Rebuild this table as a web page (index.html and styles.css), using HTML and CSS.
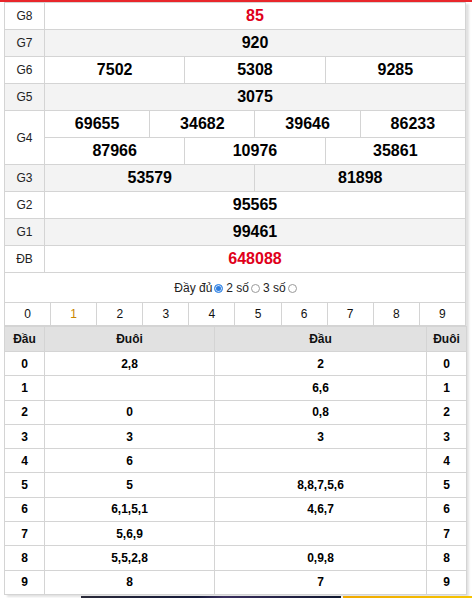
FILE: index.html
```html
<!DOCTYPE html>
<html lang="vi">
<head>
<meta charset="utf-8">
<title>KQXS</title>
<link rel="stylesheet" href="styles.css">
</head>
<body>
<div class="topbar"></div>
<div class="box">
  <table class="prize">
    <colgroup>
      <col class="c-label">
      <col span="12">
    </colgroup>
    <tr><td class="lbl">G8</td><td colspan="12" class="num red">85</td></tr>
    <tr class="alt"><td class="lbl">G7</td><td colspan="12" class="num">920</td></tr>
    <tr><td class="lbl">G6</td><td colspan="4" class="num">7502</td><td colspan="4" class="num">5308</td><td colspan="4" class="num">9285</td></tr>
    <tr class="alt"><td class="lbl">G5</td><td colspan="12" class="num">3075</td></tr>
    <tr><td class="lbl" rowspan="2">G4</td><td colspan="3" class="num">69655</td><td colspan="3" class="num">34682</td><td colspan="3" class="num">39646</td><td colspan="3" class="num">86233</td></tr>
    <tr><td colspan="4" class="num">87966</td><td colspan="4" class="num">10976</td><td colspan="4" class="num">35861</td></tr>
    <tr class="alt"><td class="lbl">G3</td><td colspan="6" class="num">53579</td><td colspan="6" class="num">81898</td></tr>
    <tr><td class="lbl">G2</td><td colspan="12" class="num">95565</td></tr>
    <tr class="alt"><td class="lbl">G1</td><td colspan="12" class="num">99461</td></tr>
    <tr><td class="lbl">ĐB</td><td colspan="12" class="num red">648088</td></tr>
  </table>

  <div class="options">
    <span class="opt">Đầy đủ</span><span class="radio checked"></span>
    <span class="opt">2 số</span><span class="radio"></span>
    <span class="opt">3 số</span><span class="radio"></span>
  </div>

  <table class="digits">
    <tr>
      <td>0</td><td class="active">1</td><td>2</td><td>3</td><td>4</td><td>5</td><td>6</td><td>7</td><td>8</td><td>9</td>
    </tr>
  </table>

  <table class="loto">
    <colgroup>
      <col class="c-d1"><col class="c-t1"><col class="c-t2"><col class="c-d2">
    </colgroup>
    <tr class="head"><th>Đầu</th><th>Đuôi</th><th>Đầu</th><th>Đuôi</th></tr>
    <tr><td>0</td><td>2,8</td><td>2</td><td>0</td></tr>
    <tr><td>1</td><td></td><td>6,6</td><td>1</td></tr>
    <tr><td>2</td><td>0</td><td>0,8</td><td>2</td></tr>
    <tr><td>3</td><td>3</td><td>3</td><td>3</td></tr>
    <tr><td>4</td><td>6</td><td></td><td>4</td></tr>
    <tr><td>5</td><td>5</td><td>8,8,7,5,6</td><td>5</td></tr>
    <tr><td>6</td><td>6,1,5,1</td><td>4,6,7</td><td>6</td></tr>
    <tr><td>7</td><td>5,6,9</td><td></td><td>7</td></tr>
    <tr><td>8</td><td>5,5,2,8</td><td>0,9,8</td><td>8</td></tr>
    <tr><td>9</td><td>8</td><td>7</td><td>9</td></tr>
  </table>
</div>
<div class="banner">
  <div class="banner-dark"></div>
  <div class="banner-yellow"></div>
</div>
</body>
</html>
```

FILE: styles.css
```css
html, body {
  margin: 0;
  padding: 0;
  background: #fff;
  font-family: "Liberation Sans", Arial, sans-serif;
  color: #111;
}

.topbar {
  height: 2px;
  background: #e8262b;
}

.box {
  width: 462px;
  margin-left: 4px;
  box-shadow: 3px 2px 2px #e2e2e2;
  background: #fff;
}

table {
  border-collapse: collapse;
  table-layout: fixed;
  width: 462px;
}

td, th {
  border: 1px solid #d4d4d4;
  padding: 0;
  text-align: center;
}

/* prize table */
.prize .c-label { width: 40px; }
.prize td { height: 26px; }
.prize tr.alt td { background: #f3f3f3; }
.prize .lbl {
  font-size: 12px;
  color: #222;
  background: #fff;
}
.prize tr.alt .lbl { background: #f3f3f3; }
.prize .num {
  font-size: 16px;
  font-weight: bold;
  color: #000;
}
.prize .num.red { color: #e0001a; }

/* options row */
.options {
  height: 29px;
  border-left: 1px solid #d4d4d4;
  border-right: 1px solid #d4d4d4;
  box-sizing: border-box;
  display: flex;
  align-items: center;
  justify-content: center;
  font-size: 12px;
  color: #222;
  padding-left: 4px;
}
.opt { margin-right: 2px; }
.radio {
  display: inline-block;
  width: 9px;
  height: 9px;
  border-radius: 50%;
  border: 1px solid #9a9a9a;
  box-sizing: border-box;
  background: #fff;
  margin: 1px 3px 0 0;
}
.radio.checked {
  border: 1px solid #3b8be6;
  background: #2f7ee0;
  box-shadow: inset 0 0 0 1px #cfe2fa;
}

/* digits */
.digits td {
  height: 22px;
  font-size: 12px;
  color: #111;
}
.digits td.active { color: #c98500; }

/* loto */
.loto .c-d1 { width: 40px; }
.loto .c-t1 { width: 170px; }
.loto .c-t2 { width: 212px; }
.loto .c-d2 { width: 40px; }
.loto th {
  height: 24px;
  background: #e1e1e1;
  font-size: 12px;
  font-weight: bold;
  color: #111;
}
.loto td {
  height: 23.3px;
  font-size: 12px;
  font-weight: bold;
  color: #000;
}

/* banner strip */
.banner {
  display: flex;
  margin-top: 1px;
  height: 6px;
}
.banner-dark {
  margin-left: 81px;
  width: 260px;
  background: linear-gradient(90deg, #2b2b3a 0%, #151a3a 45%, #3a2f5e 55%, #101830 100%);
}
.banner-yellow {
  margin-left: 2px;
  flex: 1;
  background: linear-gradient(90deg, #f0a800, #f6c400);
}
```
